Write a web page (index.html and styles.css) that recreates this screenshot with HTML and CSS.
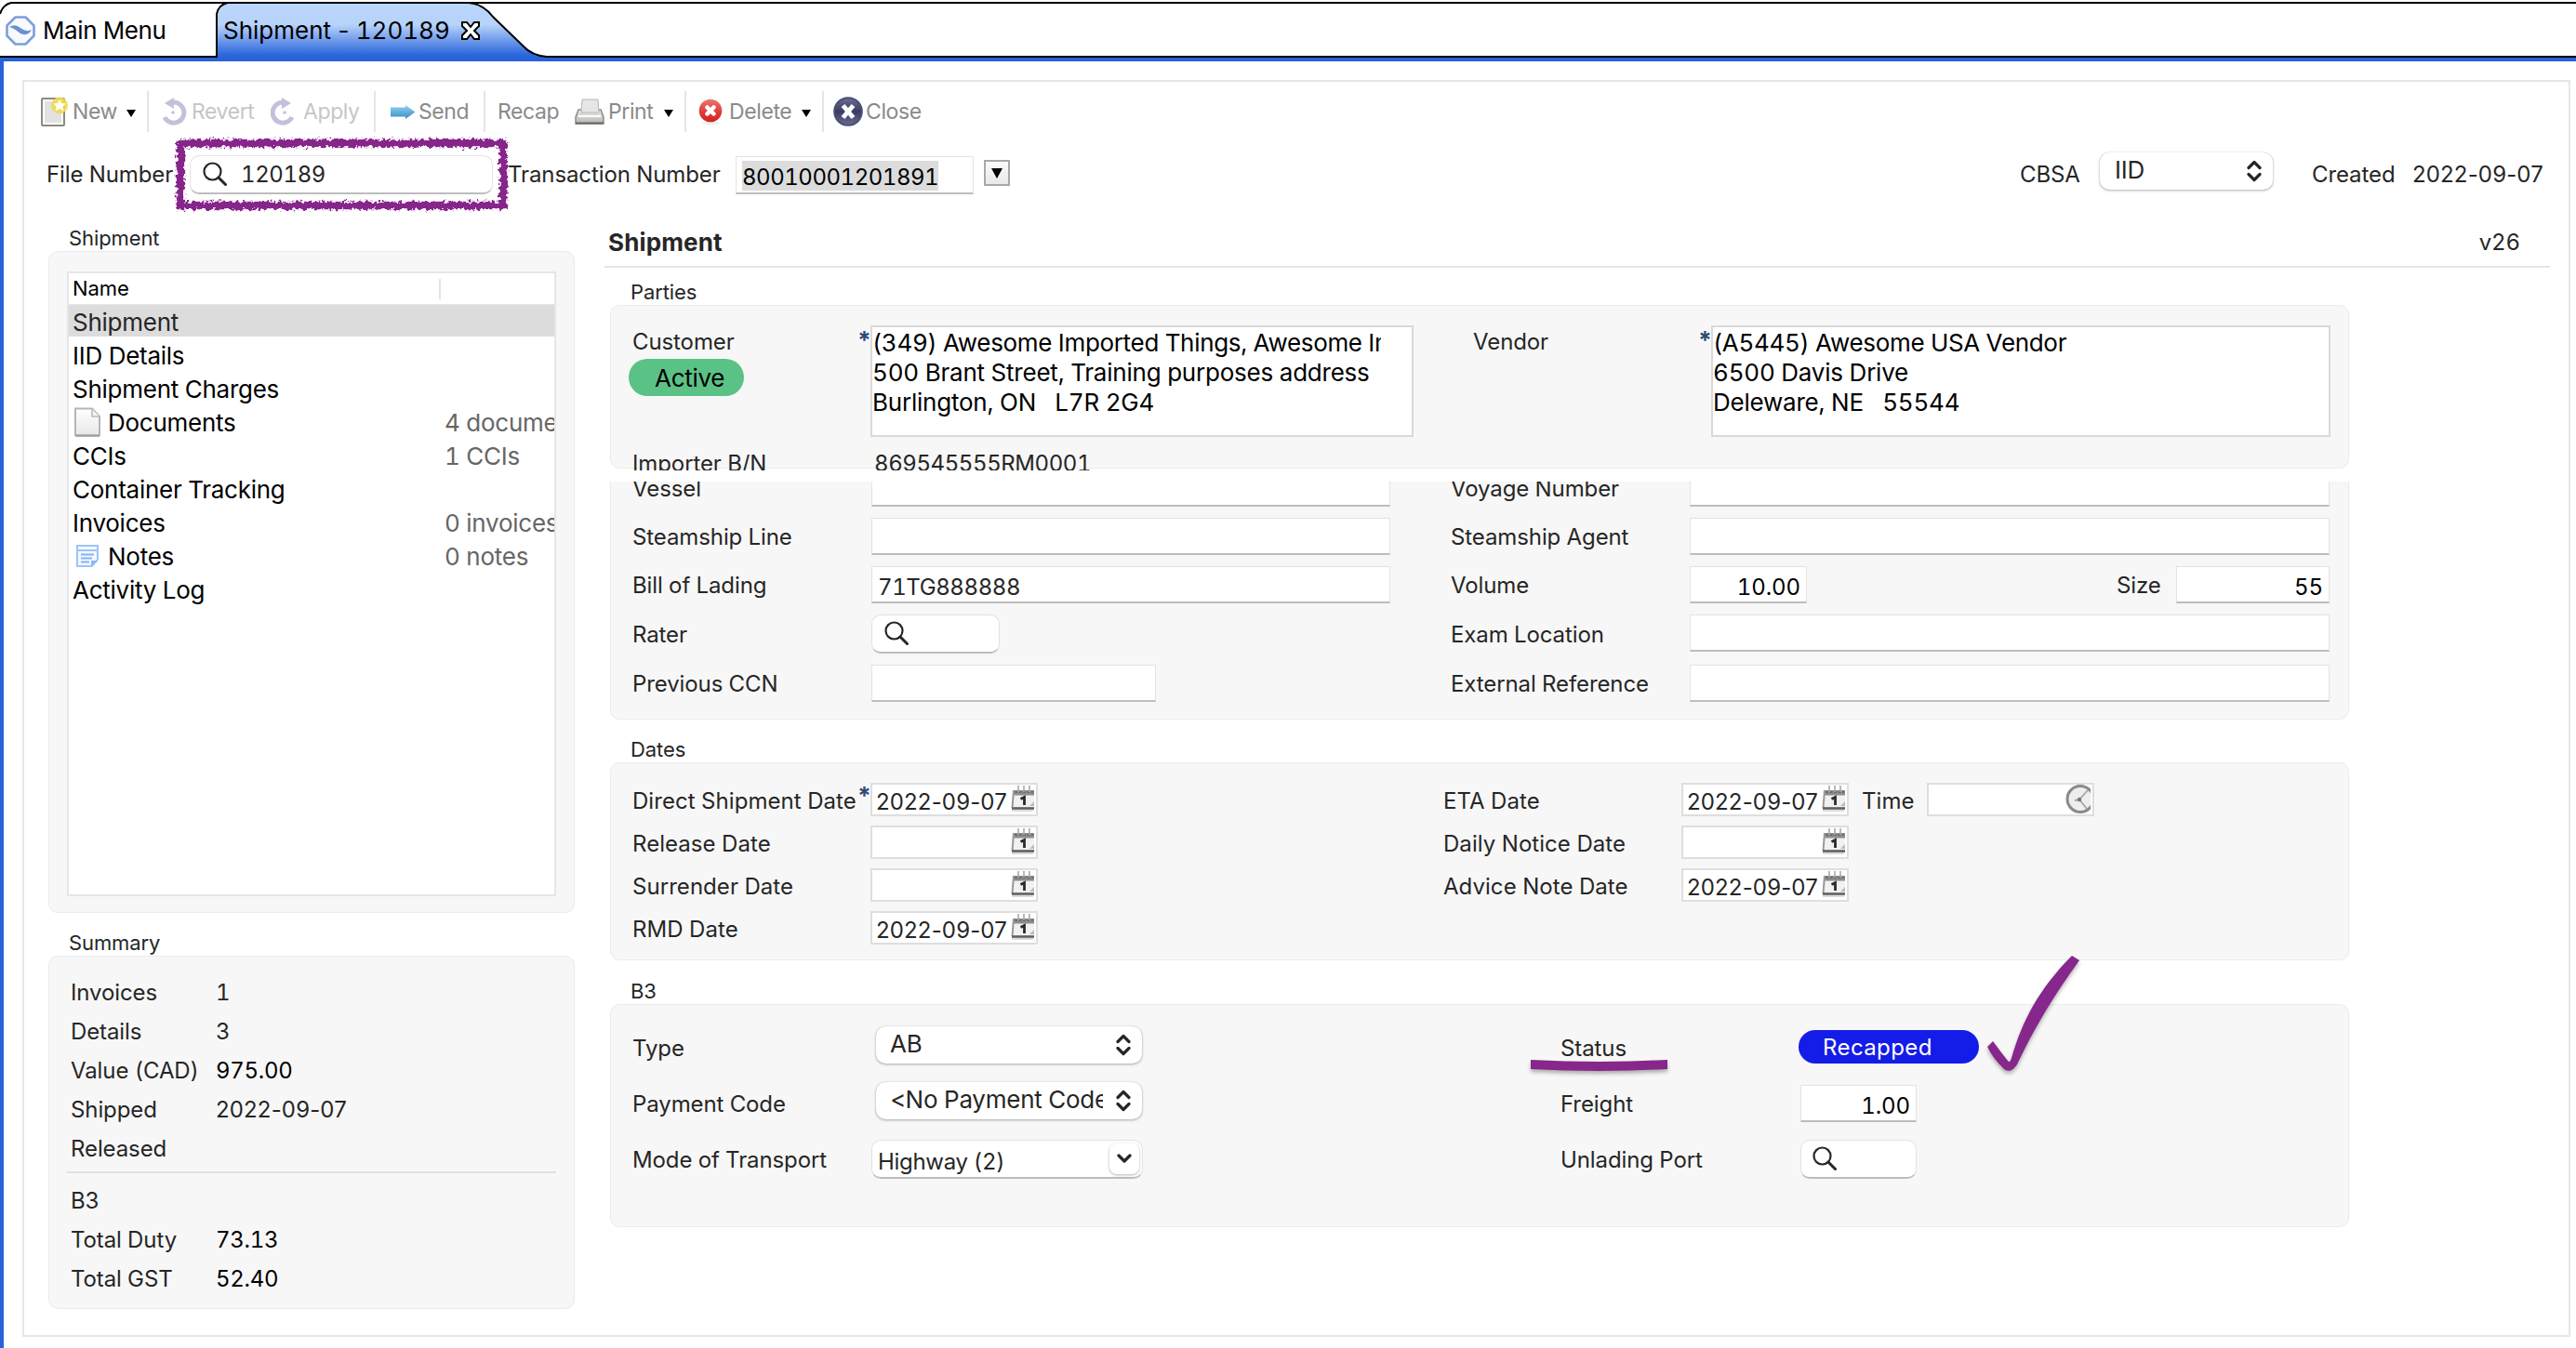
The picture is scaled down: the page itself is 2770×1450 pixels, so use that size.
FILE: index.html
```html
<!DOCTYPE html>
<html lang="en">
<head>
<meta charset="utf-8">
<title>Shipment - 120189</title>
<link rel="stylesheet" href="styles.css">
</head>
<body>
<svg class="defs" width="0" height="0" aria-hidden="true">
  <defs>
    <linearGradient id="gTab" x1="0" y1="0" x2="0" y2="1"><stop offset="0" stop-color="#bad6fb"/><stop offset=".4" stop-color="#b7d3fa"/><stop offset=".95" stop-color="#2c66dc"/><stop offset="1" stop-color="#2862d9"/></linearGradient>
    <linearGradient id="gSend" x1="0" y1="0" x2="0" y2="1"><stop offset="0" stop-color="#8ed3ee"/><stop offset="1" stop-color="#3a8dc6"/></linearGradient>
    <linearGradient id="gPage" x1="0" y1="0" x2="0" y2="1"><stop offset="0" stop-color="#fff"/><stop offset="1" stop-color="#e8e8e8"/></linearGradient>
    <linearGradient id="gMetal" x1="0" y1="0" x2="0" y2="1"><stop offset="0" stop-color="#e9ebe9"/><stop offset="1" stop-color="#b4b7b4"/></linearGradient>
    <linearGradient id="gRed" x1="0" y1="0" x2="0" y2="1"><stop offset="0" stop-color="#ef7670"/><stop offset=".6" stop-color="#dd3a35"/><stop offset="1" stop-color="#d3211c"/></linearGradient>
    <linearGradient id="gNavy" x1="0" y1="0" x2="0" y2="1"><stop offset="0" stop-color="#6d6f93"/><stop offset=".5" stop-color="#3a3b62"/><stop offset="1" stop-color="#6a6c92"/></linearGradient>
    <filter id="rough" x="-5%" y="-20%" width="110%" height="140%"><feTurbulence type="fractalNoise" baseFrequency=".28" numOctaves="3" seed="4" result="n"/><feDisplacementMap in="SourceGraphic" in2="n" scale="9" xChannelSelector="R" yChannelSelector="G"/></filter>
    <symbol id="iSearch" viewBox="0 0 26 26"><circle cx="10.5" cy="10.5" r="9" fill="none" stroke="#262626" stroke-width="2.2"/><path d="M17 17l7.5 7.5" stroke="#262626" stroke-width="3" stroke-linecap="round"/></symbol>
    <symbol id="iDown" viewBox="0 0 10 8"><path d="M0 0h10L5 8z" fill="#000"/></symbol>
    <symbol id="iUpDown" viewBox="0 0 16 24"><path d="M2 8.5L8 2.500l6 6M2 15.500l6 6 6-6" fill="none" stroke="#262626" stroke-width="3.200" stroke-linecap="round" stroke-linejoin="round"/></symbol>
    <symbol id="iCal" viewBox="0 0 25 28"><path d="M3 5h22v20H1.500z" fill="#f1f1f1"/><path d="M3.500 5h21.500v5.500H3z" fill="#8d8d8d"/><path d="M4 7h20" stroke="#6f6f6f" stroke-width="2" stroke-dasharray="3 1.500"/><path d="M8 0v7M14 0v7M20 0v7" stroke="#a8a8a8" stroke-width="1.600"/><path d="M3 5L1.500 24" stroke="#999" stroke-width="2"/><path d="M1 24.500h24" stroke="#606060" stroke-width="2.600"/><path d="M1 27h23" stroke="#cfcfcf" stroke-width="1.500"/><path d="M10.500 14.500l4-2v8.500" fill="none" stroke="#2a2a2a" stroke-width="2.800"/><path d="M20 22l5-5v5z" fill="#bbb"/></symbol>
    <symbol id="iClock" viewBox="0 0 27 31"><circle cx="16" cy="15.500" r="14" fill="#eee" stroke="#8a8a8a" stroke-width="3"/><path d="M24 6L15 16l-5 1M15 16l8 10" fill="none" stroke="#a5a5a5" stroke-width="1.800"/><circle cx="15" cy="16" r="2.200" fill="#777"/></symbol>
  </defs>
</svg>

<header class="tabs">
  <svg class="tabs-bg" width="2770" height="62" viewBox="0 0 2770 62">
    <path d="M234 62V16q2-10 12-13H504C516 4 524 10 530 18L562 49Q572 60 588 61V62z" fill="url(#gTab)"/>
    <path d="M0 15Q3 5 12 3H2770M0 61H233V15Q235 5 245 3M504 3C516 4 524 10 530 18L562 49Q572 60 588 61H2770" fill="none" stroke="#000" stroke-width="2"/>
  </svg>
  <div class="tab tab-main">
    <svg width="32" height="32" viewBox="0 0 32 32"><path d="M10.500 1.500h11l9 9v11l-9 9h-11l-9-9v-11z" fill="#f6f9fe" stroke="#7d9fd6" stroke-width="2.600" stroke-linejoin="round"/><path d="M4 12q6-4 12 1t12 2q-3 6-9 5-4-1-7-4-4-3-8-4z" fill="#6a90ce"/></svg>
    <span>Main Menu</span>
  </div>
  <div class="tab tab-active">
    <span>Shipment - <b>120189</b></span>
    <svg width="22" height="22" viewBox="0 0 22 22"><path d="M2 2h5l4 5 4-5h5v4l-5 5 5 5v4h-5l-4-5-4 5H2v-4l5-5-5-5z" fill="#fff" stroke="#000" stroke-width="2"/></svg>
  </div>
</header>

<main class="window">
<div class="frame">
  <nav class="toolbar">
    <svg width="30" height="32" viewBox="0 0 30 32"><rect x="2" y="2" width="24" height="29" rx="1" fill="#fff" stroke="#8a8b80" stroke-width="2"/><rect x="5" y="5" width="18" height="23" fill="#e2e2e2"/><circle cx="21" cy="9.500" r="9" fill="#ecdc4c" opacity=".9"/><path d="M21 3l2 4 5 .5-3.500 3 1 5-4.500-2.500-4.500 2.500 1-5-3.500-3 5-.5z" fill="#fffdf0"/></svg>
    <span>New</span>
    <svg class="tri" width="10" height="8"><use href="#iDown"/></svg>
    <i></i>
    <svg width="26" height="32" viewBox="0 0 26 32"><path d="M9 6.500A11 11 0 1 1 2 22" fill="none" stroke="#c6bfdb" stroke-width="5"/><path d="M2 7L12 1v12z" fill="#c6bfdb"/><circle cx="11" cy="17" r="1.800" fill="#c6bfdb"/></svg>
    <span class="off">Revert</span>
    <svg width="26" height="32" viewBox="0 0 26 32"><path d="M16 6.500A11 11 0 1 0 23 22" fill="none" stroke="#c6bfdb" stroke-width="5"/><path d="M22 7L12 1v12z" fill="#c6bfdb"/><circle cx="15" cy="17" r="1.800" fill="#c6bfdb"/></svg>
    <span class="off">Apply</span>
    <i></i>
    <svg width="28" height="15" viewBox="0 0 28 15"><path d="M1 2.500h16V0l10.500 7.500L17 15v-2.500H1z" fill="url(#gSend)"/></svg>
    <span>Send</span>
    <i></i>
    <span>Recap</span>
    <svg width="32" height="28" viewBox="0 0 32 28"><path d="M4 12h24l3 8v7H1v-7z" fill="url(#gMetal)" stroke="#8b8e87" stroke-width="1.500"/><path d="M8 1h17l1 14H7z" fill="#e4e7e4" stroke="#b4b7b3"/><path d="M4 19h24" stroke="#fff" stroke-width="2"/><path d="M1 26.500h30" stroke="#666961" stroke-width="2"/></svg>
    <span>Print</span>
    <svg class="tri" width="10" height="8"><use href="#iDown"/></svg>
    <i></i>
    <svg width="26" height="28" viewBox="0 0 26 28"><ellipse cx="13" cy="26.500" rx="10" ry="1.500" fill="#eee"/><circle cx="13" cy="13" r="12.300" fill="url(#gRed)"/><path d="M9.500 9.500l7 7M16.500 9.500l-7 7" stroke="#fff" stroke-width="4.500" stroke-linecap="round"/></svg>
    <span>Delete</span>
    <svg class="tri" width="10" height="8"><use href="#iDown"/></svg>
    <i></i>
    <svg width="32" height="32" viewBox="0 0 32 32"><circle cx="16" cy="16" r="14.800" fill="url(#gNavy)" stroke="#4c4d76" stroke-width="2"/><path d="M10.500 9.500l11 13M21.500 9.500l-11 13" stroke="#fff" stroke-width="5"/></svg>
    <span>Close</span>
  </nav>

  <section class="idbar">
    <span class="t-file">File Number</span>
    <div class="field search file-field">
      <svg width="26" height="26"><use href="#iSearch"/></svg><span>120189</span>
      <svg class="marker-box" width="370" height="90"><rect x="8" y="12" width="347" height="67" fill="none" stroke="#86278b" stroke-width="8.500" filter="url(#rough)"/></svg>
    </div>
    <span class="t-trans">Transaction Number</span>
    <div class="field trans-field"><span class="selected">80010001201891</span></div>
    <div class="drop"><svg width="12" height="11" viewBox="0 0 10 8" preserveAspectRatio="none"><path d="M0 0h10L5 8z"/></svg></div>
    <span class="t-cbsa">CBSA</span>
    <div class="select iid"><span>IID</span><svg width="16" height="24"><use href="#iUpDown"/></svg></div>
    <span class="t-created">Created</span>
    <span class="day">2022-09-07</span>
  </section>

  <div class="content">
    <aside class="side">
      <h3 class="group-title">Shipment</h3>
      <div class="card nav-card">
        <div class="tree">
          <div class="tree-head"><span>Name</span><span class="col2"></span></div>
          <div class="tree-row active"><span>Shipment</span></div>
          <div class="tree-row"><span>IID Details</span></div>
          <div class="tree-row"><span>Shipment Charges</span></div>
          <div class="tree-row"><span><svg width="34" height="32" viewBox="0 0 34 32"><path d="M3 1.500h18l8 8.500v20H3z" fill="url(#gPage)" stroke="#b5b5b5" stroke-width="2"/><path d="M21 2v8h8" fill="#f4f4f4" stroke="#b9b9b9" stroke-width="1.500"/><path d="M3 31h26" stroke="#999" stroke-width="1.500"/></svg><b>Documents</b></span><em>4 documents</em></div>
          <div class="tree-row"><span>CCIs</span><em>1 CCIs</em></div>
          <div class="tree-row"><span>Container Tracking</span></div>
          <div class="tree-row"><span>Invoices</span><em>0 invoices</em></div>
          <div class="tree-row"><span><svg width="34" height="26" viewBox="0 0 34 26"><path d="M5 2h22v15l-6 7H5z" fill="#f3f8ff" stroke="#9fc3f8" stroke-width="2"/><path d="M5 7h22" stroke="#9fc3f8" stroke-width="2"/><path d="M9 11.500h14M9 15.500h12M9 19.500h9" stroke="#86b2f5" stroke-width="2"/><path d="M20 24v-6h7z" fill="#8db7f7"/></svg><b>Notes</b></span><em>0 notes</em></div>
          <div class="tree-row"><span>Activity Log</span></div>
        </div>
      </div>

      <h3 class="group-title summary-title">Summary</h3>
      <div class="card summary">
        <dl>
          <dt>Invoices</dt><dd>1</dd>
          <dt>Details</dt><dd>3</dd>
          <dt>Value (CAD)</dt><dd class="amount">975.00</dd>
          <dt>Shipped</dt><dd class="day">2022-09-07</dd>
          <dt>Released</dt><dd></dd>
        </dl>
        <hr>
        <dl>
          <dt>B3</dt><dd></dd>
          <dt>Total Duty</dt><dd class="amount">73.13</dd>
          <dt>Total GST</dt><dd class="amount">52.40</dd>
        </dl>
      </div>
    </aside>

    <section class="detail">
      <div class="detail-head"><h2>Shipment</h2><span>v26</span></div>

      <div class="groups">
        <div class="clip-parties">
          <h3 class="group-title">Parties</h3>
          <div class="card parties">
            <div class="customer"><div class="label">Customer</div><div class="pill active-pill">Active</div></div>
            <div class="address"><span class="req">*</span><p>(349) Awesome Imported Things, Awesome Imports</p><p>500 Brant Street, Training purposes address</p><p>Burlington, ON &nbsp; L7R 2G4</p></div>
            <div class="label vendor">Vendor</div>
            <div class="address"><span class="req">*</span><p>(A5445) Awesome USA Vendor</p><p>6500 Davis Drive</p><p>Deleware, NE &nbsp; 55544</p></div>
            <div class="label importer">Importer B/N</div>
            <div class="importer bn">869545555RM0001</div>
          </div>
        </div>

        <div class="clip-transport">
          <div class="card transport">
            <div class="label">Vessel</div><div class="field"></div>
            <div class="label">Voyage Number</div><div class="field"></div>
            <div class="label">Steamship Line</div><div class="field"></div>
            <div class="label">Steamship Agent</div><div class="field"></div>
            <div class="label">Bill of Lading</div><div class="field text">71TG888888</div>
            <div class="label">Volume</div>
            <div class="split"><div class="field num w-volume">10.00</div><div class="label size-label">Size</div><div class="field num w-size">55</div></div>
            <div class="label">Rater</div><div class="field search w-rater"><svg width="26" height="26"><use href="#iSearch"/></svg></div>
            <div class="label">Exam Location</div><div class="field"></div>
            <div class="label">Previous CCN</div><div class="field w-ccn"></div>
            <div class="label">External Reference</div><div class="field"></div>
          </div>
        </div>

        <h3 class="group-title dates-title">Dates</h3>
        <div class="card dates">
          <div class="label">Direct Shipment Date</div><div class="date"><span class="req">*</span><span class="day">2022-09-07</span><svg width="25" height="28"><use href="#iCal"/></svg></div>
          <div class="label">ETA Date</div><div class="date"><span class="day">2022-09-07</span><svg width="25" height="28"><use href="#iCal"/></svg></div>
          <div class="label">Time</div><div class="date time"><span></span><svg width="27" height="31"><use href="#iClock"/></svg></div>
          <div class="label">Release Date</div><div class="date"><span></span><svg width="25" height="28"><use href="#iCal"/></svg></div>
          <div class="label">Daily Notice Date</div><div class="date"><span></span><svg width="25" height="28"><use href="#iCal"/></svg></div>
          <div class="label new-row">Surrender Date</div><div class="date"><span></span><svg width="25" height="28"><use href="#iCal"/></svg></div>
          <div class="label">Advice Note Date</div><div class="date"><span class="day">2022-09-07</span><svg width="25" height="28"><use href="#iCal"/></svg></div>
          <div class="label new-row">RMD Date</div><div class="date"><span class="day">2022-09-07</span><svg width="25" height="28"><use href="#iCal"/></svg></div>
        </div>

        <h3 class="group-title b3-title">B3</h3>
        <div class="card b3">
          <div class="label">Type</div>
          <div class="select wide"><span>AB</span><svg width="16" height="24"><use href="#iUpDown"/></svg></div>
          <div class="label status">Status
            <svg class="underline" width="160" height="24" viewBox="0 0 160 24"><path d="M6 5Q80 9 153 5V15Q80 19 6 15z" fill="#86278b"/></svg>
          </div>
          <div class="status-cell"><div class="pill recapped">Recapped</div>
            <svg class="check" width="120" height="140" viewBox="0 0 120 140"><path d="M12 109L18 103Q26 114 34 124Q36 127 38 121C50 80 68 46 103 11L111 16C82 56 62 90 44 128Q36 140 28 131Q18 121 12 109z" fill="#86278b"/></svg>
          </div>
          <div class="label">Payment Code</div>
          <div class="select wide"><span>&lt;No Payment Code&gt;</span><svg width="16" height="24"><use href="#iUpDown"/></svg></div>
          <div class="label">Freight</div>
          <div class="field num w-small">1.00</div>
          <div class="label">Mode of Transport</div>
          <div class="field combo"><span>Highway (2)</span><div><svg width="16" height="11" viewBox="0 0 16 11"><path d="M2 2l6 6 6-6" fill="none" stroke="#262626" stroke-width="3.200" stroke-linecap="round" stroke-linejoin="round"/></svg></div></div>
          <div class="label">Unlading Port</div>
          <div class="field search w-small port"><svg width="26" height="26"><use href="#iSearch"/></svg></div>
        </div>
      </div>
    </section>
  </div>
</div>
</main>
</body>
</html>
```
FILE: styles.css
```css
* { box-sizing: border-box; }
body {
  margin: 0;
  width: 2770px;
  height: 1450px;
  overflow: hidden;
  background: #fff;
  color: #262626;
  font: 24px/30px Inter, "Liberation Sans", sans-serif;
  font-variant-numeric: tabular-nums;
  letter-spacing: -.1px;
  white-space: nowrap;
}
h2, h3, p, dl, dt, dd { margin: 0; font-weight: 400; }
svg { display: block; flex: none; }
.defs { position: absolute; }
.day { font-variant-numeric: normal; letter-spacing: .15px; }

/* tab strip */
.tabs { position: relative; display: flex; height: 62px; color: #000; font-size: 26px; }
.tabs-bg { position: absolute; left: 0; top: 0; }
.tab { position: relative; display: flex; align-items: center; height: 62px; padding-top: 4px; }
.tab-main { width: 234px; padding-left: 6px; gap: 8px; letter-spacing: -.4px; }
.tab-active { width: 360px; padding-left: 6px; letter-spacing: 0; }
.tab-active span { width: 255px; font-variant-numeric: normal; }
.tab-active b { font-weight: 400; font-variant-numeric: tabular-nums; }

.window { height: 1388px; border-left: 4px solid #2862d9; border-top: 4px solid #2862d9; padding: 20px 6px 12px 20px; }
.frame { height: 1352px; border: 2px solid #e6e6e6; }

/* toolbar */
.toolbar {
  display: grid;
  grid-template-columns: 35px 58px 22px 17px 31px 85px 35px 76px 17px 31px 70px 15px 83px 36px 60px 22px 15px 33px 78px 22px 12px 35px 70px;
  align-items: center;
  height: 64px;
  padding-left: 17px;
  color: #8a8a8a;
  font-size: 23px;
  letter-spacing: -.4px;
}
.toolbar i { width: 2px; height: 44px; background: #e5e5e5; }
.toolbar .off { color: #c6c6c6; }
.toolbar .tri { margin-top: 3px; }

/* identification row */
.idbar { display: flex; align-items: center; height: 72px; padding-left: 24px; }
.t-file { width: 154px; }
.t-trans { width: 245px; margin-left: 16px; }
.t-cbsa { width: 87px; margin-left: 1086px; }
.t-created { width: 108px; margin-left: 42px; }

.field {
  height: 40px;
  background: #fff;
  border: 1px solid #e3e3e3;
  border-bottom: 2px solid #bdbdbd;
}
.search { display: flex; align-items: center; height: 42px; border-radius: 10px; padding-left: 13px; }
.search svg { margin-top: -1px; }
.file-field { position: relative; width: 326px; }
.file-field span { margin-left: 15px; letter-spacing: -.4px; }
.file-field .marker-box { position: absolute; left: -19px; top: -26px; margin-top: 0; }
.trans-field { width: 256px; height: 41px; padding: 4px 0 0 6px; }
.selected { display: inline-block; height: 32px; line-height: 35px; background: #dcdcdc; color: #000; letter-spacing: -.48px; }
.drop { display: flex; justify-content: center; align-items: center; width: 28px; height: 28px; margin: -4px 0 0 11px; border: 2px solid #a8a8a8; background: linear-gradient(#fafafa, #e9e9e9); }
.select {
  display: flex;
  align-items: center;
  justify-content: space-between;
  height: 40px;
  border-radius: 10px;
  background: #fff;
  box-shadow: 0 1px 3px rgba(0, 0, 0, .3), 0 0 1px rgba(0, 0, 0, .25);
  padding: 0 12px 0 15px;
  font-size: 26px;
  letter-spacing: -.25px;
}
.iid { width: 186px; margin: -8px 0 0 -1px; padding-left: 16px; }
.iid span { margin-top: -2px; }

/* columns */
.content { display: grid; grid-template-columns: 598px 2092px; padding-left: 26px; }
.side { width: 566px; padding-top: 18px; }
.group-title { height: 28px; line-height: 29px; font-size: 22px; padding-left: 22px; }
.card { background: #f7f7f7; border: 1px solid #ebebeb; border-radius: 10px; }
.nav-card { height: 712px; padding: 21px 19px; }
.tree { height: 672px; border: 2px solid #e6e6e6; background: #fff; color: #000; overflow: hidden; }
.tree-head { display: flex; align-items: center; height: 34px; padding-left: 4px; border-bottom: 1px solid #e6e6e6; font-size: 22px; line-height: 30px; }
.tree-head span:first-child { width: 394px; margin-top: -1px; }
.tree-head .col2 { width: 2px; height: 22px; background: #e3e3e3; }
.tree-row { display: grid; grid-template-columns: 400px 300px; align-items: center; height: 36px; padding: 2px 0 0 4px; font-size: 26px; letter-spacing: -.26px; }
.tree-row span { display: flex; align-items: center; }
.tree-row b { font-weight: 400; margin-left: 4px; }
.tree-row svg { margin-top: -2px; }
.tree-row em { font-style: normal; color: #666; }
.tree-row.active { height: 34px; margin-bottom: 2px; padding-top: 4px; background: #dcdcdc; color: #262626; }

.summary-title { margin-top: 18px; }
.summary { height: 380px; padding: 18px 19px; }
.summary dl { display: grid; grid-template-columns: 156px 300px; grid-auto-rows: 42px; line-height: 42px; padding-left: 4px; }
.summary hr { height: 2px; border: 0; margin: 3px 0 9px; background: #e0e0e0; }
.amount { color: #000; letter-spacing: -.3px; }

/* detail pane */
.detail { padding-top: 10px; }
.detail-head { display: flex; justify-content: space-between; align-items: center; height: 54px; padding: 2px 32px 0 4px; border-bottom: 2px solid #e5e5e5; }
.detail-head h2 { font-size: 26px; font-weight: 700; letter-spacing: .15px; }
.groups { width: 1870px; margin-left: 6px; }
.clip-parties { height: 218px; padding-top: 12px; overflow: hidden; }
.parties {
  display: grid;
  grid-template-columns: 256px 584px 320px 666px;
  grid-template-rows: 120px 30px;
  row-gap: 12px;
  height: 176px;
  padding: 21px 0 0 23px;
}
.customer { padding-top: 3px; }
.pill { display: flex; align-items: center; border-radius: 20px; }
.active-pill { width: 124px; height: 40px; margin: 3px 0 0 -4px; padding: 2px 0 0 28px; background: #5bc286; color: #000; font-size: 26px; letter-spacing: -.3px; }
.vendor { margin-left: 64px; padding-top: 3px; }
.address { position: relative; padding: 1px 0 0; border: 2px solid #d9d9d9; background: #fff; color: #000; font-size: 26px; line-height: 32px; letter-spacing: -.22px; }
.address p { width: 547px; overflow: hidden; }
.address p:nth-of-type(1) { letter-spacing: -.32px; }
.req { position: absolute; left: -17px; top: -2px; width: 14px; color: #2b4a75; font-weight: 700; font-size: 26px; line-height: 32px; }
.importer { line-height: 33px; }
.bn { padding-left: 4px; letter-spacing: -.42px; }

.clip-transport { height: 256px; margin-top: 12px; overflow: hidden; }
.transport {
  display: grid;
  grid-template-columns: 257px 558px 322px 688px;
  grid-template-rows: 40px 40px 40px 42px 40px;
  row-gap: 12px;
  height: 296px;
  margin-top: -40px;
  padding: 26px 0 0 23px;
}
.transport > .label { align-self: center; padding-top: 2px; }
.transport > .label:nth-child(4n+3) { padding-left: 65px; }
.transport .text { line-height: 43px; padding-left: 6px; letter-spacing: -.4px; }
.num { color: #000; text-align: right; line-height: 43px; padding-right: 6px; }
.split { display: flex; align-items: center; }
.w-volume { width: 126px; }
.w-size { width: 165px; }
.size-label { width: 64px; margin-left: 333px; padding-top: 2px; }
.w-rater { width: 138px; padding-left: 13px; }
.w-ccn { width: 306px; }

.dates-title { margin-top: 18px; }
.dates {
  display: grid;
  grid-template-columns: 256px 616px 256px 194px 70px 180px;
  grid-auto-rows: 36px;
  row-gap: 10px;
  height: 213px;
  padding: 21px 0 0 23px;
}
.dates .label { line-height: 39px; letter-spacing: .05px; }
.new-row { grid-column: 1; }
.date { position: relative; display: flex; justify-content: space-between; width: 180px; border: 2px solid #dedede; background: #fff; padding: 1px 2px 0 4px; line-height: 35px; }
.date .req { top: -4px; }
.time { padding-top: 0; }

.b3-title { margin-top: 19px; }
.b3 {
  display: grid;
  grid-template-columns: 257px 741px 258px 300px;
  grid-auto-rows: 40px;
  row-gap: 20px;
  height: 240px;
  padding: 26px 0 0 23px;
}
.b3 .label { line-height: 42px; }
.wide { width: 286px; margin: -3px 0 0 5px; }
.wide span { width: 229px; overflow: hidden; line-height: 36px; margin-top: -2px; }
.status, .status-cell { position: relative; }
.underline, .check { position: absolute; filter: drop-shadow(0 3px 2px rgba(0, 0, 0, .3)); }
.underline { left: -38px; top: 28px; }
.recapped { width: 194px; height: 36px; margin: 1px 0 0 -2px; padding: 2px 0 0 26px; background: #141ce8; color: #fff; letter-spacing: .4px; }
.check { left: 189px; top: -90px; }
.w-small { width: 125px; }
.port { margin-top: -1px; padding-left: 12px; }
.combo { display: flex; align-items: center; justify-content: space-between; width: 292px; height: 42px; margin-top: -1px; border-radius: 10px; padding: 0 3px 0 6px; }
.combo span { padding-top: 7px; letter-spacing: -.3px; }
.combo div { display: flex; align-items: center; justify-content: center; width: 32px; height: 33px; border-radius: 8px; box-shadow: 0 1px 3px rgba(0, 0, 0, .3); }
```
